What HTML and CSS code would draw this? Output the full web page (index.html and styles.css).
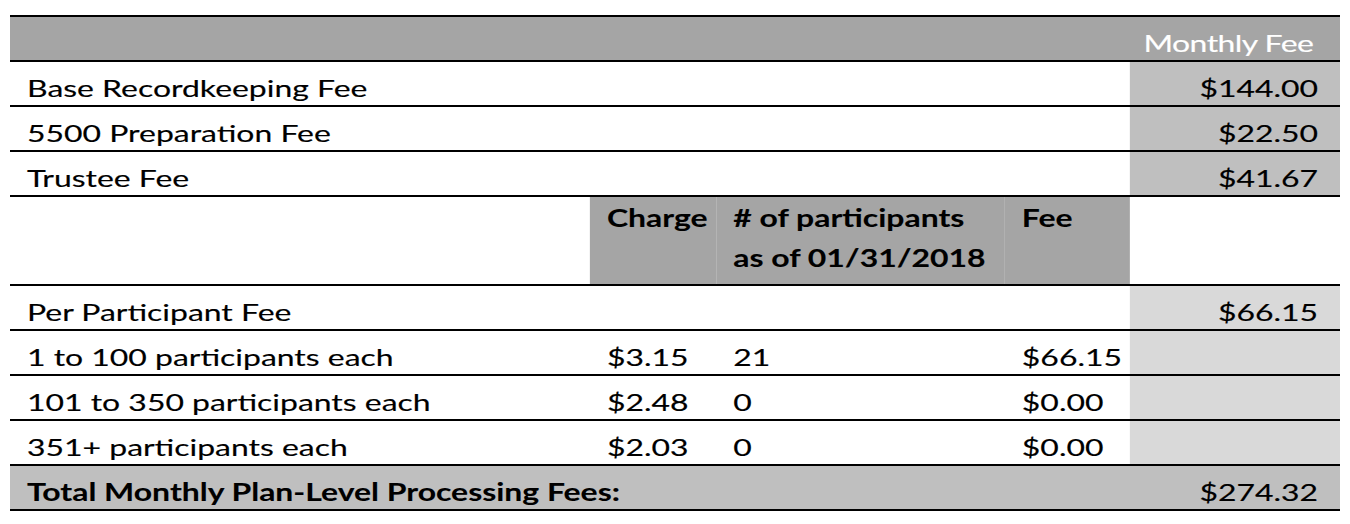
FILE: index.html
```html
<!DOCTYPE html>
<html>
<head>
<meta charset="utf-8">
<title>Monthly Plan-Level Processing Fees</title>
<link rel="stylesheet" href="styles.css">
</head>
<body>
<div class="sheet">
  <div class="row head">
    <div class="c span4"></div>
    <div class="c num hdr">Monthly Fee</div>
  </div>
  <div class="row">
    <div class="c span4">Base Recordkeeping Fee</div>
    <div class="c num mid">$144.00</div>
  </div>
  <div class="row">
    <div class="c span4">5500 Preparation Fee</div>
    <div class="c num mid">$22.50</div>
  </div>
  <div class="row">
    <div class="c span4">Trustee Fee</div>
    <div class="c num mid">$41.67</div>
  </div>
  <div class="row sub">
    <div class="c"></div>
    <div class="c dark b">Charge</div>
    <div class="c dark b"># of participants<br>as of 01/31/2018</div>
    <div class="c dark b">Fee</div>
    <div class="c"></div>
  </div>
  <div class="row">
    <div class="c span4">Per Participant Fee</div>
    <div class="c num light">$66.15</div>
  </div>
  <div class="row">
    <div class="c">1 to 100 participants each</div>
    <div class="c">$3.15</div>
    <div class="c">21</div>
    <div class="c">$66.15</div>
    <div class="c light"></div>
  </div>
  <div class="row">
    <div class="c">101 to 350 participants each</div>
    <div class="c">$2.48</div>
    <div class="c">0</div>
    <div class="c">$0.00</div>
    <div class="c light"></div>
  </div>
  <div class="row">
    <div class="c">351+ participants each</div>
    <div class="c">$2.03</div>
    <div class="c">0</div>
    <div class="c">$0.00</div>
    <div class="c light"></div>
  </div>
  <div class="row total">
    <div class="c span4 b">Total Monthly Plan-Level Processing Fees:</div>
    <div class="c num">$274.32</div>
  </div>
</div>
</body>
</html>
```

FILE: styles.css
```css
html, body {
  margin: 0;
  padding: 0;
  background: #ffffff;
}

.sheet {
  width: 1000px;
  margin: 15px 0 0 10px;
  transform: scaleX(1.33);
  transform-origin: 0 0;
  border-bottom: 2px solid #000000;
  font-family: Lato, "Liberation Sans", sans-serif;
  font-size: 24px;
  color: #000000;
  -webkit-text-stroke: 0.15px currentColor;
}

.row {
  display: grid;
  grid-template-columns: 436px 95px 217px 94px 1fr;
  border-top: 2px solid #000000;
  height: 45px;
  box-sizing: border-box;
}

.c {
  padding: 11px 0 0 12.8px;
  line-height: 29px;
  white-space: nowrap;
}

.span4 {
  grid-column: 1 / 5;
}

.num {
  text-align: right;
  padding-left: 0;
  padding-right: 16.5px;
}

.head {
  background: #a5a5a5;
}

.hdr {
  color: #ffffff;
  padding-right: 20px;
  letter-spacing: -0.4px;
}

.mid {
  background: #bfbfbf;
}

.light {
  background: #d9d9d9;
}

.dark {
  background: #a5a5a5;
}

.b {
  font-weight: 700;
  -webkit-text-stroke: 0.1px currentColor;
}

.sub {
  height: 89px;
}

.sub .c {
  line-height: 40px;
  padding-top: 1px;
}

.total {
  background: #bfbfbf;
}
```
